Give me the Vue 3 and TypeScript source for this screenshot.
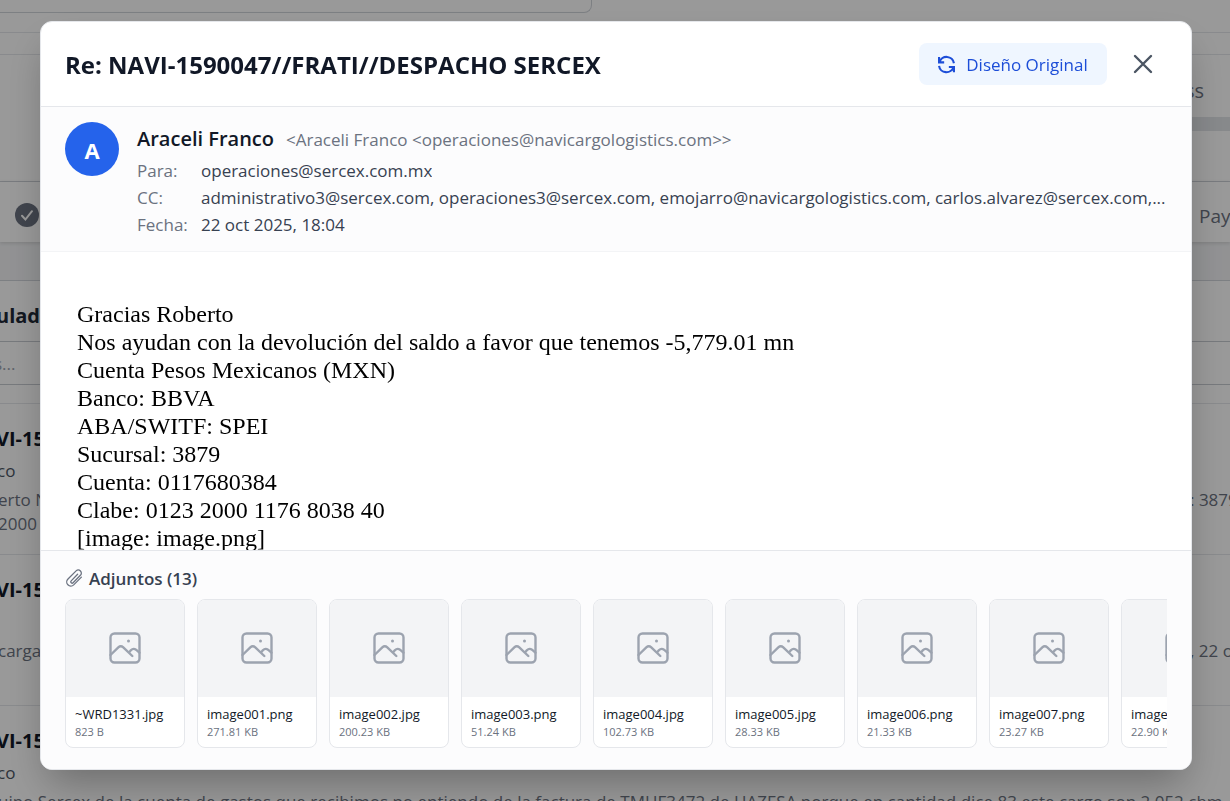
<script setup lang="ts">
interface Attachment {
  name: string
  size: string
}

interface MailRow {
  subject: string
  from: string
  preview: string[]
  trail: string
}

const attachments: Attachment[] = [
  { name: '~WRD1331.jpg', size: '823 B' },
  { name: 'image001.png', size: '271.81 KB' },
  { name: 'image002.jpg', size: '200.23 KB' },
  { name: 'image003.png', size: '51.24 KB' },
  { name: 'image004.jpg', size: '102.73 KB' },
  { name: 'image005.jpg', size: '28.33 KB' },
  { name: 'image006.png', size: '21.33 KB' },
  { name: 'image007.png', size: '23.27 KB' },
  { name: 'image008.png', size: '22.90 KB' },
]

const lines: string[] = [
  'Gracias Roberto',
  'Nos ayudan con la devolución del saldo a favor que tenemos -5,779.01 mn',
  'Cuenta Pesos Mexicanos (MXN)',
  'Banco: BBVA',
  'ABA/SWITF: SPEI',
  'Sucursal: 3879',
  'Cuenta: 0117680384',
  'Clabe: 0123 2000 1176 8038 40',
  '[image: image.png]',
]

const details = [
  { label: 'Para:', value: 'operaciones@sercex.com.mx' },
  {
    label: 'CC:',
    value:
      'administrativo3@sercex.com, operaciones3@sercex.com, emojarro@navicargologistics.com, carlos.alvarez@sercex.com,...',
  },
  { label: 'Fecha:', value: '22 oct 2025, 18:04' },
]

const rows: MailRow[] = [
  { subject: 'VI-15', from: 'co', preview: ['erto N', '2000'], trail: ': 3879' },
  { subject: 'VI-15', from: '', preview: ['carga'], trail: ', 22 oct' },
  {
    subject: 'VI-15',
    from: 'co',
    preview: [
      'uipo Sercex de la cuenta de gastos que recibimos no entiendo de la factura de TMHF3472 de HAZESA porque en cantidad dice 83 este cargo son 2,052 cbm',
    ],
    trail: '',
  },
]
</script>

<template>
  <div class="screen">
    <main class="page">
      <div class="search-strip"><div class="search-box"></div></div>
      <div class="divider-strip"></div>
      <section class="summary">
        <span class="summary-text">ss</span>
        <div class="track"></div>
      </section>
      <section class="tabs">
        <svg class="check" viewBox="0 0 24 24" aria-hidden="true">
          <circle cx="12" cy="12" r="12" fill="#6b7280" />
          <path d="M7 12.8l3.4 3.7L17 8.2" fill="none" stroke="#fff" stroke-width="2" stroke-linecap="round" />
        </svg>
        <span class="tab-text">Payment</span>
      </section>
      <section class="mails">
        <h2 class="mails-title">ulado</h2>
        <div class="filter">s...</div>
        <article v-for="(row, i) in rows" :key="i" class="mail">
          <h3>{{ row.subject }}</h3>
          <p class="mail-from">{{ row.from }}</p>
          <div class="mail-preview">
            <p v-for="(text, j) in row.preview" :key="j">{{ text }}</p>
            <span v-if="row.trail" class="mail-trail">{{ row.trail }}</span>
          </div>
        </article>
      </section>
    </main>

    <div class="overlay">
      <div class="modal" role="dialog" aria-modal="true" aria-labelledby="mail-title">
        <header class="head">
          <h1 id="mail-title">Re: NAVI-1590047//FRATI//DESPACHO SERCEX</h1>
          <button type="button" class="design">
            <svg viewBox="0 0 16 16" aria-hidden="true">
              <path d="M1 1v5H5.8M1.4 5.8A7 7 0 0 1 15 6.8M15 15.4v-5h-4.8M14.6 10.4A7 7 0 0 1 1 9.2" />
            </svg>
            <span>Diseño Original</span>
          </button>
          <button type="button" class="close" aria-label="Cerrar">
            <svg viewBox="0 0 18 18" aria-hidden="true"><path d="M1 1l16 16M17 1L1 17" /></svg>
          </button>
        </header>

        <section class="sender">
          <div class="avatar">A</div>
          <div class="sender-info">
            <div class="who">
              <strong>Araceli Franco</strong>
              <span>&lt;Araceli Franco &lt;operaciones@navicargologistics.com&gt;&gt;</span>
            </div>
            <dl>
              <div v-for="d in details" :key="d.label" class="detail">
                <dt>{{ d.label }}</dt>
                <dd>{{ d.value }}</dd>
              </div>
            </dl>
          </div>
        </section>

        <section class="message">
          <div v-for="line in lines" :key="line">{{ line }}</div>
        </section>

        <footer class="files">
          <h2>
            <svg viewBox="0 0 18 18" aria-hidden="true">
              <path
                d="M12.6 5.2L6.2 11.9a1.3 1.3 0 0 0 1.9 1.8l7.3-7.4a3 3 0 0 0-4.3-4.4L3 10a4 4 0 0 0 5.7 5.9l7.7-7.8"
              />
            </svg>
            <span>Adjuntos (13)</span>
          </h2>
          <ul>
            <li v-for="file in attachments" :key="file.name">
              <div class="thumb">
                <svg viewBox="0 0 32 32" aria-hidden="true">
                  <rect x="1.5" y="1.5" width="29" height="29" rx="4" />
                  <path d="M1.5 23l7.8-7.6q2.5-2.2 5 0l9 8.6M20.2 20.2l1.6-1.9q2.5-2.5 5.2-.6l3.4 2.9" />
                  <circle cx="19.5" cy="9" r="1.5" />
                </svg>
              </div>
              <div class="caption">
                <p class="file-name">{{ file.name }}</p>
                <p class="file-size">{{ file.size }}</p>
              </div>
            </li>
          </ul>
        </footer>
      </div>
    </div>
  </div>
</template>

<style>
body {
  margin: 0;
}
</style>

<style scoped>
.screen {
  height: 100vh;
  overflow: hidden;
  font-family: 'Segoe UI', 'Open Sans', 'Noto Sans', sans-serif;
  font-size: 17px;
  color: #374151;
}

h1,
h2,
h3,
p,
dl,
dd,
ul {
  margin: 0;
  padding: 0;
}

.page {
  height: 100%;
  overflow: hidden;
  background: #f3f4f6;
  white-space: nowrap;
}

.search-strip {
  height: 32px;
  background: #fff;
  border-bottom: 1px solid #e5e7eb;
}

.search-box {
  width: 591px;
  height: 12px;
  border: solid #d1d5db;
  border-width: 0 1px 1px 0;
  border-bottom-right-radius: 8px;
}

.divider-strip {
  height: 21px;
  background: #fff;
  border-bottom: 1px solid #e5e7eb;
}

.summary {
  display: flex;
  flex-direction: column;
  align-items: flex-end;
  box-sizing: border-box;
  height: 127px;
  padding-top: 18px;
  background: #fff;
  border-bottom: 1px solid #d1d5db;
}

.summary-text {
  height: 44px;
  padding-right: 26px;
  font-size: 20px;
  line-height: 36px;
  color: #6b7280;
}

.track {
  width: 50%;
  height: 14px;
  background: #e1e4e8;
}

.tabs {
  display: flex;
  align-items: center;
  justify-content: space-between;
  height: 60px;
  padding-left: 15px;
  padding-top: 6px;
  box-sizing: border-box;
  background: #fff;
  box-shadow: 0 1px 4px rgba(0, 0, 0, 0.15);
}

.check {
  width: 24px;
  height: 24px;
}

.tab-text {
  width: 31px;
  padding-top: 2px;
  overflow: hidden;
  font-size: 19px;
  color: #6b7280;
}

.mails {
  margin-top: 38px;
  background: #fff;
  border-top: 1px solid #d1d5db;
}

.mails-title {
  height: 60px;
  margin-left: -4px;
  font-size: 20px;
  line-height: 69px;
  color: #1f2937;
}

.filter {
  height: 42px;
  margin-bottom: 18px;
  border: solid #c7cbd1;
  border-width: 1px 0;
  line-height: 43px;
  color: #9ca3af;
  text-indent: -6px;
}

.mail {
  box-sizing: border-box;
  height: 151px;
  padding-top: 18px;
  border-top: 1px solid #e5e7eb;
}

.mail h3 {
  height: 33px;
  margin-left: -4px;
  font-size: 20px;
  line-height: 33px;
  color: #111827;
}

.mail-from {
  height: 33px;
  margin-left: -3px;
  line-height: 32px;
  color: #4b5563;
}

.mail-preview {
  display: flow-root;
  position: relative;
  color: #6b7280;
  line-height: 24px;
}

.mail-preview p {
  margin-left: -2px;
}

.mail-trail {
  position: absolute;
  top: 0;
  right: 0;
  width: 40px;
}

.overlay {
  position: fixed;
  inset: 0;
  display: flex;
  padding: 21px 38px 31px 40px;
  background: rgba(0, 0, 0, 0.4);
}

.modal {
  display: flex;
  flex: 1;
  flex-direction: column;
  min-width: 0;
  overflow: hidden;
  background: #fff;
  border: 1px solid #e5e7eb;
  border-radius: 12px;
  box-shadow: 0 20px 40px -8px rgba(0, 0, 0, 0.3);
}

.head {
  display: flex;
  align-items: center;
  height: 84px;
  flex: none;
  padding: 0 24px;
  border-bottom: 1px solid #e5e7eb;
}

.head h1 {
  flex: 1;
  padding-top: 2px;
  font-size: 24px;
  line-height: 32px;
  color: #111827;
  white-space: nowrap;
}

button {
  display: flex;
  align-items: center;
  justify-content: center;
  padding: 0;
  border: 0;
  background: none;
  font: inherit;
  cursor: pointer;
}

.design {
  gap: 11px;
  width: 188px;
  height: 42px;
  border-radius: 8px;
  background: #eff6ff;
  color: #1d4ed8;
}

.design svg {
  width: 17px;
  height: 17px;
  overflow: visible;
  fill: none;
  stroke: currentColor;
  stroke-width: 2;
}

.close {
  width: 48px;
  height: 42px;
  margin-left: 12px;
  color: #4b5563;
}

.close svg {
  width: 18px;
  height: 18px;
  overflow: visible;
  fill: none;
  stroke: currentColor;
  stroke-width: 2.4;
  stroke-linecap: round;
}

.sender {
  display: flex;
  flex: none;
  gap: 18px;
  box-sizing: border-box;
  height: 145px;
  padding: 15px 24px 0;
  background: #fcfcfd;
  border-bottom: 1px solid #f3f4f6;
}

.avatar {
  flex: none;
  width: 54px;
  height: 54px;
  border-radius: 50%;
  background: #2563eb;
  color: #fff;
  font-size: 22px;
  font-weight: 700;
  line-height: 56px;
  text-align: center;
}

.sender-info {
  flex: 1;
  min-width: 0;
}

.who {
  display: flex;
  align-items: baseline;
  gap: 12px;
  height: 35px;
  line-height: 34px;
  white-space: nowrap;
  color: #6b7280;
}

.who strong {
  font-size: 20px;
  font-weight: 600;
  color: #111827;
}

.detail {
  display: flex;
  line-height: 27px;
}

.detail dt {
  flex: none;
  width: 64px;
  color: #6b7280;
}

.detail dd {
  overflow: hidden;
  white-space: nowrap;
  text-overflow: ellipsis;
}

.message {
  flex: 1;
  min-height: 0;
  overflow: hidden;
  padding: 48px 36px 0;
  font: 24px/28px 'Times New Roman', 'Liberation Serif', serif;
  color: #000;
}

.files {
  flex: none;
  padding: 12px 24px 21px;
  background: #fcfcfd;
  border-top: 1px solid #e5e7eb;
}

.files h2 {
  display: flex;
  align-items: center;
  gap: 6px;
  height: 30px;
  margin-bottom: 6px;
  font-size: 17px;
  font-weight: 600;
}

.files h2 svg {
  width: 18px;
  height: 18px;
  fill: none;
  stroke: #6b7280;
  stroke-width: 1.3;
  stroke-linecap: round;
}

.files ul {
  display: flex;
  gap: 12px;
  overflow: hidden;
  list-style: none;
}

.files li {
  flex: none;
  box-sizing: border-box;
  width: 120px;
  height: 149px;
  overflow: hidden;
  background: #fff;
  border: 1px solid #e5e7eb;
  border-radius: 8px;
}

.thumb {
  display: flex;
  align-items: center;
  justify-content: center;
  box-sizing: border-box;
  height: 97px;
  padding-bottom: 1px;
  background: #f3f4f6;
}

.thumb svg {
  width: 32px;
  height: 32px;
  fill: none;
  stroke: #9ca3af;
  stroke-width: 2.4;
  stroke-linecap: round;
}

.thumb circle {
  fill: #9ca3af;
  stroke: none;
}

.caption {
  padding: 7px 9px;
}

.file-name {
  font-size: 13px;
  line-height: 20px;
  color: #111827;
  white-space: nowrap;
}

.file-size {
  font-size: 11px;
  line-height: 16px;
  color: #6b7280;
}
</style>
